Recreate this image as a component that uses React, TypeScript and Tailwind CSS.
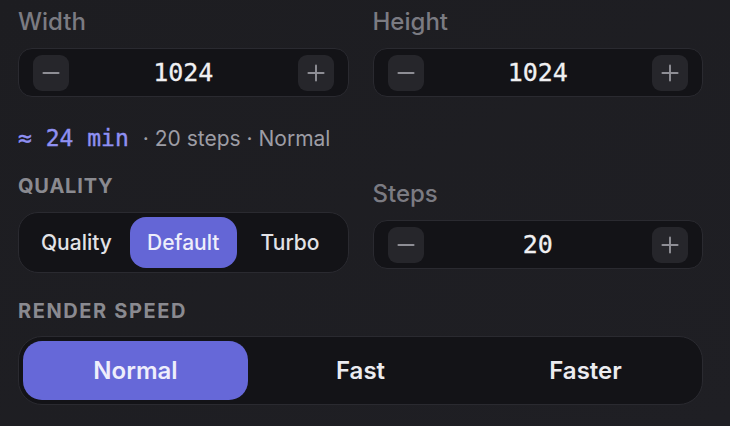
import { Minus, Plus } from 'lucide-react'

const sans = "font-['Inter','Noto_Sans',sans-serif]"
const mono = "font-['DejaVu_Sans_Mono','Liberation_Mono',monospace]"

const Stepper = ({ value }: { value: string }) => (
  <div className="flex h-[49px] items-center justify-between rounded-[14px] border border-[#2a2a30] bg-[#131317] px-[14px]">
    <button className="flex h-[36px] w-[36px] items-center justify-center rounded-[9px] bg-[#26262b] text-[#8e8e95]">
      <Minus size={26} strokeWidth={1.8} />
    </button>
    <span className={`${mono} text-[25px] text-[#f0f0f2] [-webkit-text-stroke:0.3px_#f0f0f2]`}>
      {value}
    </span>
    <button className="flex h-[36px] w-[36px] items-center justify-center rounded-[9px] bg-[#26262b] text-[#8e8e95]">
      <Plus size={26} strokeWidth={1.8} />
    </button>
  </div>
)

const Field = ({ label, value }: { label: string; value: string }) => (
  <div>
    <p className="text-[24px] leading-[30px] font-medium text-[#7b7b82]">{label}</p>
    <div className="mt-[11px]">
      <Stepper value={value} />
    </div>
  </div>
)

const qualities = ['Quality', 'Default', 'Turbo']
const speeds = ['Normal', 'Fast', 'Faster']

export default function App() {
  return (
    <div
      className={`${sans} h-[426px] w-[730px] overflow-hidden bg-gradient-to-br from-[#1d1d21] to-[#1f1f24] pt-[7px] pl-[18px] pr-[27px]`}
    >
      <div className="grid grid-cols-2 gap-6">
        <Field label="Width" value="1024" />
        <Field label="Height" value="1024" />
      </div>

      <div className="mt-[24px] flex h-[28px] items-baseline">
        <span className={`${mono} text-[23px] text-[#8f90f2] [-webkit-text-stroke:0.4px_#8f90f2]`}>
          ≈ 24 min
        </span>
        <span className="ml-[14px] text-[21px] text-[#9d9da5]">· 20 steps · Normal</span>
      </div>

      <div className="mt-[25px] grid grid-cols-2 items-start gap-6">
        <div>
          <p className="text-[20px] leading-[24px] font-bold tracking-[0.04em] text-[#8a8a90]">
            QUALITY
          </p>
          <div className="mt-[14px] flex h-[61px] rounded-[20px] border border-[#2a2a30] bg-[#131317] p-[4px]">
            {qualities.map((q) => (
              <div
                key={q}
                className={`flex flex-1 items-center justify-center rounded-[16px] text-[21px] font-medium ${
                  q === 'Default' ? 'bg-[#6466d6] text-[#eeeefb]' : 'text-[#e2e2e6]'
                }`}
              >
                {q}
              </div>
            ))}
          </div>
        </div>
        <div className="pt-[5px]">
          <Field label="Steps" value="20" />
        </div>
      </div>

      <p className="mt-[26px] text-[20px] leading-[24px] font-bold tracking-[0.08em] text-[#8a8a90]">
        RENDER SPEED
      </p>
      <div className="mt-[13px] flex h-[69px] rounded-[24px] border border-[#2a2a30] bg-[#131317] p-[4px]">
        {speeds.map((s) => (
          <div
            key={s}
            className={`flex flex-1 items-center justify-center rounded-[19px] text-[24px] font-semibold ${
              s === 'Normal' ? 'bg-[#6668d8] text-[#eeeefb]' : 'text-[#ececf0]'
            }`}
          >
            {s}
          </div>
        ))}
      </div>
    </div>
  )
}
